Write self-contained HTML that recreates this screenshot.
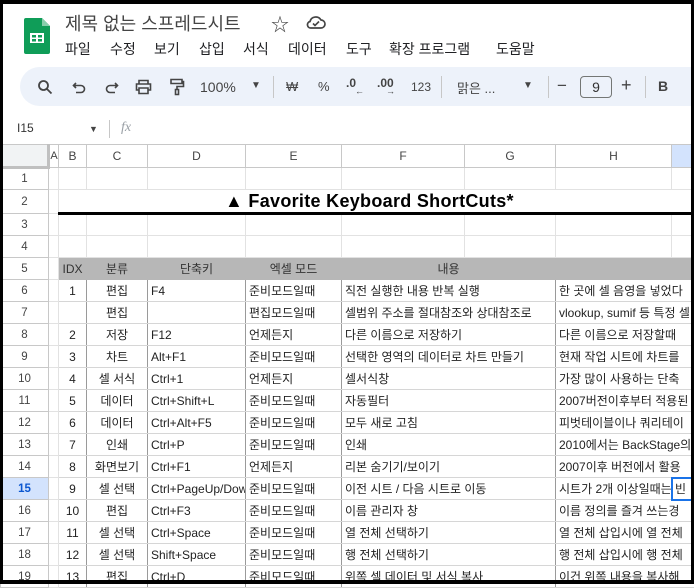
<!DOCTYPE html>
<html><head><meta charset="utf-8">
<style>
*{margin:0;padding:0;box-sizing:border-box}
body{width:694px;height:584px;overflow:hidden;background:#fff;font-family:"Liberation Sans","Noto Sans CJK KR",sans-serif;position:relative;color:#202124}
.a{position:absolute;white-space:nowrap}
.frame{position:absolute;left:0;top:0;width:694px;height:584px;border:solid #000;border-width:4px 3px 4px 3px;pointer-events:none;z-index:10}
.menu span{position:absolute;top:39px;font-size:14px;color:#202124}
.tb{position:absolute;left:20px;top:67px;width:700px;height:39px;background:#edf2fa;border-radius:20px}
.ic{position:absolute;top:77px;font-size:13px;color:#444}
.sep{position:absolute;top:76px;width:1px;height:22px;background:#c7c7c7}
table{position:absolute;left:0;top:144px;width:711px;border-collapse:collapse;table-layout:fixed;font-size:12px}
td{border:1px solid #e2e2e2;height:22px;padding:0 3px;overflow:hidden;white-space:nowrap;color:#222}
tr.h td{height:23px;text-align:center;color:#444;border-color:#c8c8c8;background:#fff}
td.rh{text-align:center;color:#444;border-color:#c8c8c8;font-size:11.5px}
td.c{text-align:center}
tr.d td.k{border-left:1px solid #9a9a9a;border-right:1px solid #9a9a9a;border-bottom:1px solid #d6d6d6}
tr.g td.k{background:#b7b7b7;border-color:#b7b7b7;color:#333}
</style></head><body>
<svg class="a" style="left:24px;top:18px" width="26" height="36" viewBox="0 0 26 36"><path d="M2 0h16l8 8v26a2 2 0 0 1-2 2H2a2 2 0 0 1-2-2V2a2 2 0 0 1 2-2z" fill="#0f9d58"/><path d="M18 0v8h8z" fill="#87ceac"/><rect x="6" y="15" width="14" height="10" fill="#fff"/><rect x="8" y="17" width="4" height="2.5" fill="#0f9d58"/><rect x="14" y="17" width="4" height="2.5" fill="#0f9d58"/><rect x="8" y="21" width="4" height="2.5" fill="#0f9d58"/><rect x="14" y="21" width="4" height="2.5" fill="#0f9d58"/></svg>
<div class="a" style="left:65px;top:10px;font-size:18px;color:#444">제목 없는 스프레드시트</div>
<div class="a" style="left:271px;top:11px;font-size:18px;color:#444">☆</div>
<svg class="a" style="left:306px;top:14px" width="20" height="16" viewBox="0 0 20 16"><path d="M5 14h10a4 4 0 0 0 0-8 6 6 0 0 0-11 1.5A3.3 3.3 0 0 0 5 14z" fill="none" stroke="#444" stroke-width="1.7"/><path d="M7 9.5l2 2 4-4" fill="none" stroke="#444" stroke-width="1.6"/></svg>
<div class="menu"><span style="left:65px">파일</span><span style="left:110px">수정</span><span style="left:154px">보기</span><span style="left:199px">삽입</span><span style="left:243px">서식</span><span style="left:288px">데이터</span><span style="left:346px">도구</span><span style="left:389px">확장 프로그램</span><span style="left:496px">도움말</span></div>
<div class="tb"></div>
<svg class="a" style="left:37px;top:79px" width="16" height="16" viewBox="0 0 16 16"><circle cx="6.5" cy="6.5" r="4.5" fill="none" stroke="#444" stroke-width="1.8"/><path d="M10 10l4.5 4.5" stroke="#444" stroke-width="1.8"/></svg>
<svg class="a" style="left:72px;top:80px" width="16" height="16" viewBox="0 0 16 16"><path d="M4 3L1.5 5.5 4 8M2 5.5h7a3.5 3.5 0 0 1 0 7H4" fill="none" stroke="#444" stroke-width="1.6"/></svg>
<svg class="a" style="left:103px;top:80px" width="16" height="16" viewBox="0 0 16 16"><path d="M12 3l2.5 2.5L12 8M14 5.5H7a3.5 3.5 0 0 0 0 7h5" fill="none" stroke="#444" stroke-width="1.6"/></svg>
<svg class="a" style="left:135px;top:79px" width="17" height="16" viewBox="0 0 17 16"><path d="M4 5V1.5h9V5M4 11H1.5V5h14v6H13M4 9h9v5.5H4z" fill="none" stroke="#444" stroke-width="1.6"/></svg>
<svg class="a" style="left:169px;top:78px" width="16" height="18" viewBox="0 0 16 18"><path d="M2 1.5h11v4H2zM13 3.5h1.5v5H8v3M6.5 11.5h3v5h-3z" fill="none" stroke="#444" stroke-width="1.6"/></svg>
<div class="ic" style="left:200px;top:79px;font-size:14px">100%</div>
<div class="ic" style="left:251px;top:80px;font-size:10px">▼</div>
<div class="sep" style="left:273px"></div>
<div class="ic" style="left:286px;top:79px">₩</div>
<div class="ic" style="left:318px;top:79px">%</div>
<div class="ic" style="left:346px;top:76px;font-size:12px;font-weight:bold">.0<span style="position:absolute;left:9px;top:10px;font-size:9px">←</span></div>
<div class="ic" style="left:377px;top:76px;font-size:12px;font-weight:bold">.00<span style="position:absolute;left:9px;top:10px;font-size:9px">→</span></div>
<div class="ic" style="left:411px;top:80px;font-size:12px">123</div>
<div class="sep" style="left:441px"></div>
<div class="ic" style="left:457px;top:78px;font-size:13px">맑은 ...</div>
<div class="ic" style="left:523px;top:80px;font-size:10px">▼</div>
<div class="sep" style="left:548px"></div>
<div class="ic" style="left:557px;top:76px;font-size:17px">−</div>
<div class="a" style="left:580px;top:76px;width:32px;height:22px;border:1px solid #747775;border-radius:4px;text-align:center;font-size:14px;line-height:20px;color:#333">9</div>
<div class="ic" style="left:621px;top:75px;font-size:18px">+</div>
<div class="sep" style="left:645px"></div>
<div class="ic" style="left:658px;top:78px;font-size:14px;font-weight:bold">B</div>
<div class="a" style="left:17px;top:121px;font-size:12px;color:#333">I15</div>
<div class="a" style="left:89px;top:124px;font-size:9px;color:#444">▼</div>
<div class="a" style="left:109px;top:120px;width:1px;height:18px;background:#c7c7c7"></div>
<div class="a" style="left:121px;top:120px;font-size:14px;color:#9aa0a6;font-style:italic;font-family:'Liberation Serif',serif">fx</div>
<table>
<colgroup><col style="width:48px"><col style="width:10px"><col style="width:28px"><col style="width:61px"><col style="width:98px"><col style="width:96px"><col style="width:123px"><col style="width:91px"><col style="width:116px"><col style="width:40px"></colgroup>
<tr class="h"><td style="background:#f1f3f4;border-right:3px solid #c0c0c0;border-bottom:3px solid #c0c0c0"></td><td style="padding:0;font-size:11px">A</td><td>B</td><td>C</td><td>D</td><td>E</td><td>F</td><td>G</td><td>H</td><td style="background:#d3e3fd"></td></tr>
<tr><td class="rh">1</td><td></td><td></td><td></td><td></td><td></td><td></td><td></td><td></td><td></td></tr>
<tr><td class="rh" style="height:24px">2</td><td></td><td colspan="8" style="text-align:left;padding-left:166px;font-size:18px;font-weight:bold;color:#000;border-bottom:3px solid #000;letter-spacing:0.3px">▲ Favorite Keyboard ShortCuts*</td></tr>
<tr><td class="rh">3</td><td></td><td></td><td></td><td></td><td></td><td></td><td></td><td></td><td></td></tr>
<tr><td class="rh">4</td><td></td><td></td><td></td><td></td><td></td><td></td><td></td><td></td><td></td></tr>
<tr class="d g"><td class="rh">5</td><td></td><td class="k c">IDX</td><td class="k c">분류</td><td class="k c">단축키</td><td class="k c">엑셀 모드</td><td class="k c" colspan="2">내용</td><td class="k"></td><td class="k"></td></tr>
<tr class="d"><td class="rh">6</td><td></td><td class="k c">1</td><td class="k c">편집</td><td class="k">F4</td><td class="k">준비모드일때</td><td class="k" colspan="2">직전 실행한 내용 반복 실행</td><td class="k" colspan="2">한 곳에 셀 음영을 넣었다</td></tr>
<tr class="d"><td class="rh">7</td><td></td><td class="k c"></td><td class="k c">편집</td><td class="k"></td><td class="k">편집모드일때</td><td class="k" colspan="2">셀범위 주소를 절대참조와 상대참조로</td><td class="k" colspan="2">vlookup, sumif 등 특정 셀</td></tr>
<tr class="d"><td class="rh">8</td><td></td><td class="k c">2</td><td class="k c">저장</td><td class="k">F12</td><td class="k">언제든지</td><td class="k" colspan="2">다른 이름으로 저장하기</td><td class="k" colspan="2">다른 이름으로 저장할때</td></tr>
<tr class="d"><td class="rh">9</td><td></td><td class="k c">3</td><td class="k c">차트</td><td class="k">Alt+F1</td><td class="k">준비모드일때</td><td class="k" colspan="2">선택한 영역의 데이터로 차트 만들기</td><td class="k" colspan="2">현재 작업 시트에 차트를</td></tr>
<tr class="d"><td class="rh">10</td><td></td><td class="k c">4</td><td class="k c">셀 서식</td><td class="k">Ctrl+1</td><td class="k">언제든지</td><td class="k" colspan="2">셀서식창</td><td class="k" colspan="2">가장 많이 사용하는 단축</td></tr>
<tr class="d"><td class="rh">11</td><td></td><td class="k c">5</td><td class="k c">데이터</td><td class="k">Ctrl+Shift+L</td><td class="k">준비모드일때</td><td class="k" colspan="2">자동필터</td><td class="k" colspan="2">2007버전이후부터 적용된</td></tr>
<tr class="d"><td class="rh">12</td><td></td><td class="k c">6</td><td class="k c">데이터</td><td class="k">Ctrl+Alt+F5</td><td class="k">준비모드일때</td><td class="k" colspan="2">모두 새로 고침</td><td class="k" colspan="2">피벗테이블이나 쿼리테이</td></tr>
<tr class="d"><td class="rh">13</td><td></td><td class="k c">7</td><td class="k c">인쇄</td><td class="k">Ctrl+P</td><td class="k">준비모드일때</td><td class="k" colspan="2">인쇄</td><td class="k" colspan="2">2010에서는 BackStage의</td></tr>
<tr class="d"><td class="rh">14</td><td></td><td class="k c">8</td><td class="k c">화면보기</td><td class="k">Ctrl+F1</td><td class="k">언제든지</td><td class="k" colspan="2">리본 숨기기/보이기</td><td class="k" colspan="2">2007이후 버전에서 활용</td></tr>
<tr class="d"><td class="rh" style="background:#d3e3fd;color:#0b57d0;font-weight:bold">15</td><td></td><td class="k c">9</td><td class="k c">셀 선택</td><td class="k">Ctrl+PageUp/Dow</td><td class="k">준비모드일때</td><td class="k" colspan="2">이전 시트 / 다음 시트로 이동</td><td class="k" colspan="2">시트가 2개 이상일때는 빈</td></tr>
<tr class="d"><td class="rh">16</td><td></td><td class="k c">10</td><td class="k c">편집</td><td class="k">Ctrl+F3</td><td class="k">준비모드일때</td><td class="k" colspan="2">이름 관리자 창</td><td class="k" colspan="2">이름 정의를 즐겨 쓰는경</td></tr>
<tr class="d"><td class="rh">17</td><td></td><td class="k c">11</td><td class="k c">셀 선택</td><td class="k">Ctrl+Space</td><td class="k">준비모드일때</td><td class="k" colspan="2">열 전체 선택하기</td><td class="k" colspan="2">열 전체 삽입시에 열 전체</td></tr>
<tr class="d"><td class="rh">18</td><td></td><td class="k c">12</td><td class="k c">셀 선택</td><td class="k">Shift+Space</td><td class="k">준비모드일때</td><td class="k" colspan="2">행 전체 선택하기</td><td class="k" colspan="2">행 전체 삽입시에 행 전체</td></tr>
<tr class="d"><td class="rh">19</td><td></td><td class="k c">13</td><td class="k c">편집</td><td class="k">Ctrl+D</td><td class="k">준비모드일때</td><td class="k" colspan="2">위쪽 셀 데이터 및 서식 복사</td><td class="k" colspan="2">이건 위쪽 내용을 복사해</td></tr>
</table>
<div class="a" style="left:671px;top:477px;width:26px;height:24px;border:2px solid #1a73e8"></div>
<div class="frame"></div>
</body></html>
